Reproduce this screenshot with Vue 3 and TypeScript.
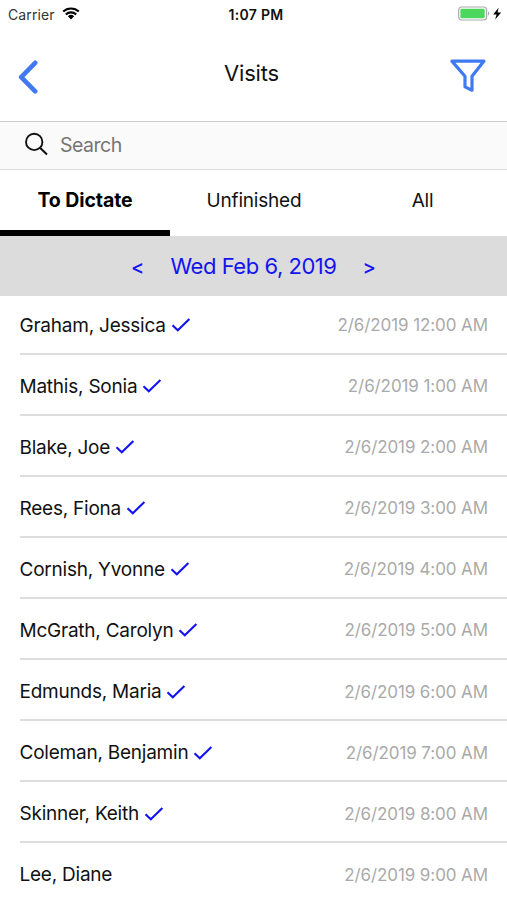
<script setup lang="ts">
import { ref } from 'vue'

interface Visit {
  name: string
  time: string
  done: boolean
}

const tabs: string[] = ['To Dictate', 'Unfinished', 'All']
const activeTab = ref<string>('To Dictate')
const search = ref<string>('')

const visits: Visit[] = [
  { name: 'Graham, Jessica', time: '2/6/2019 12:00 AM', done: true },
  { name: 'Mathis, Sonia', time: '2/6/2019 1:00 AM', done: true },
  { name: 'Blake, Joe', time: '2/6/2019 2:00 AM', done: true },
  { name: 'Rees, Fiona', time: '2/6/2019 3:00 AM', done: true },
  { name: 'Cornish, Yvonne', time: '2/6/2019 4:00 AM', done: true },
  { name: 'McGrath, Carolyn', time: '2/6/2019 5:00 AM', done: true },
  { name: 'Edmunds, Maria', time: '2/6/2019 6:00 AM', done: true },
  { name: 'Coleman, Benjamin', time: '2/6/2019 7:00 AM', done: true },
  { name: 'Skinner, Keith', time: '2/6/2019 8:00 AM', done: true },
  { name: 'Lee, Diane', time: '2/6/2019 9:00 AM', done: false },
]
</script>

<template>
  <div class="screen">
    <div class="status">
      <div class="status-left">
        <span class="carrier">Carrier</span>
        <svg class="wifi" viewBox="0 0 18 13" width="18" height="13">
          <path d="M1.2 4.6A11.2 11.2 0 0 1 16.8 4.6M3.8 7.6A7.3 7.3 0 0 1 14.2 7.6" fill="none" stroke="#000" stroke-width="2.1" />
          <path d="M5.9 9.3A4.5 4.5 0 0 1 12.1 9.3L9 12.4Z" fill="#000" />
        </svg>
      </div>
      <span class="clock">1:07 PM</span>
      <div class="status-right">
        <svg viewBox="0 0 45 16" width="45" height="16">
          <rect x=".7" y="1" width="27.9" height="13" rx="3" fill="#fff" stroke="#aaa" stroke-width="1.2" />
          <rect x="2.4" y="2.8" width="24.3" height="9.4" rx="1.3" fill="#4cd75f" />
          <path d="M30 5.3c1.6.8 1.6 3.6 0 4.4z" fill="#aaa" />
          <path d="M40.6 1.8 35.2 8.4h3.4l-1.5 5.2 6.1-7.1h-3.6z" fill="#000" />
        </svg>
      </div>
    </div>

    <header class="nav">
      <button class="icon-button back" aria-label="Back">
        <svg viewBox="0 0 22 36" width="22" height="36">
          <path d="M17.2 3.8 3.2 18.2 17.2 32.4" fill="none" stroke="#417af0" stroke-width="4.6" stroke-linecap="round" stroke-linejoin="round" />
        </svg>
      </button>
      <h1 class="title">Visits</h1>
      <button class="icon-button" aria-label="Filter">
        <svg viewBox="0 0 38 36" width="38" height="36">
          <path d="M2.9 4.1H35L23 19.3V33.2L16 29.9V19.3Z" fill="none" stroke="#417af0" stroke-width="3.2" stroke-linejoin="round" />
        </svg>
      </button>
    </header>

    <label class="search">
      <svg viewBox="0 0 24 24" width="24" height="24">
        <circle cx="10.2" cy="9.9" r="8.2" fill="none" stroke="#111" stroke-width="1.9" />
        <path d="M16 15.8 23 22.4" stroke="#111" stroke-width="2.1" />
      </svg>
      <input v-model="search" class="search-input" type="text" placeholder="Search" />
    </label>

    <nav class="tabs">
      <button
        v-for="tab in tabs"
        :key="tab"
        class="tab"
        :class="{ active: tab === activeTab }"
        @click="activeTab = tab"
      >{{ tab }}</button>
    </nav>

    <div class="date-bar">
      <button class="step">&lt;</button>
      <span class="date">Wed Feb 6, 2019</span>
      <button class="step">&gt;</button>
    </div>

    <ul class="visits">
      <li v-for="visit in visits" :key="visit.name" class="visit">
        <span class="name">{{ visit.name }}</span>
        <svg v-if="visit.done" class="check" viewBox="0 0 20 16" width="20" height="16">
          <path d="M1.5 8.2 6.8 13.2 18.4 2" fill="none" stroke="#1212f4" stroke-width="2.1" />
        </svg>
        <span class="time">{{ visit.time }}</span>
      </li>
    </ul>
  </div>
</template>

<style>
body {
  margin: 0;
  background: #fff;
}
</style>

<style scoped>
.screen {
  width: 507px;
  height: 900px;
  overflow: hidden;
  background: #fff;
  color: #111;
  font-family: Inter, "Liberation Sans", sans-serif;
}
button {
  margin: 0;
  padding: 0;
  border: 0;
  background: none;
  color: inherit;
  font: inherit;
}
svg {
  display: block;
  flex: none;
}
.status {
  display: grid;
  grid-template-columns: 1fr auto 1fr;
  align-items: center;
  box-sizing: border-box;
  height: 28px;
  padding: 0 4px 0 8px;
}
.status-left {
  display: flex;
  align-items: center;
  gap: 7px;
}
.wifi {
  margin-bottom: 2px;
}
.carrier {
  font-size: 14px;
  letter-spacing: 0.1px;
  color: #333;
}
.clock {
  padding-left: 1px;
  font-size: 14px;
  font-weight: 600;
  letter-spacing: 0.3px;
}
.status-right {
  display: flex;
  justify-content: flex-end;
}
.nav {
  display: grid;
  grid-template-columns: 38px 1fr 38px;
  align-items: center;
  box-sizing: border-box;
  height: 94px;
  padding: 1px 20px 0 17px;
  border-bottom: 1px solid #ccc;
}
.back {
  padding: 3px 0 0 1px;
}
.title {
  margin: 0;
  padding: 0 1px 4px 0;
  text-align: center;
  font-size: 22px;
  font-weight: 400;
  letter-spacing: -0.2px;
}
.search {
  display: flex;
  align-items: center;
  gap: 12px;
  box-sizing: border-box;
  height: 48px;
  padding: 0 24px 3px;
  border-bottom: 1px solid #ddd;
  background: #fafafa;
}
.search-input {
  flex: 1;
  padding: 2px 0 0;
  border: 0;
  outline: 0;
  background: none;
  font: 400 19.5px Inter, "Liberation Sans", sans-serif;
  letter-spacing: -0.5px;
}
.search-input::placeholder {
  color: #757575;
}
.tabs {
  display: grid;
  grid-template-columns: 170px 1fr 169px;
  height: 66px;
}
.tab {
  box-sizing: border-box;
  border-bottom: 6px solid transparent;
  font-size: 19px;
  letter-spacing: -0.2px;
}
.tab.active {
  border-bottom-color: #000;
  color: #000;
  font-size: 19.5px;
  font-weight: 700;
  letter-spacing: -0.1px;
}
.date-bar {
  display: flex;
  align-items: center;
  justify-content: center;
  gap: 26px;
  height: 60px;
  background: #dcdcdc;
  color: #1414ee;
}
.date {
  font-size: 22px;
  letter-spacing: -0.46px;
}
.step {
  padding-top: 2px;
  font-size: 20px;
  font-weight: 500;
}
.visits {
  margin: 0;
  padding: 0 0 0 19.5px;
  list-style: none;
}
.visit {
  display: flex;
  align-items: center;
  box-sizing: border-box;
  height: 61.1px;
  padding-right: 19px;
  padding-top: 4px;
  border-bottom: 2px solid #ddd;
}
.visit:first-child {
  height: 58.5px;
  padding-top: 2px;
}
.name {
  font-size: 19px;
  letter-spacing: -0.23px;
}
.check {
  margin-left: 5px;
}
.time {
  margin-left: auto;
  color: #aaa;
  font-size: 17px;
  letter-spacing: -0.09px;
}
</style>
